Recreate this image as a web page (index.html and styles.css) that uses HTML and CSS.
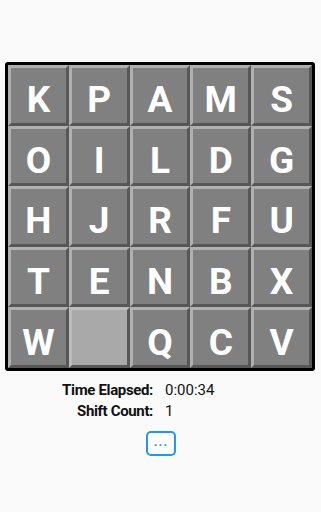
FILE: index.html
```html
<!DOCTYPE html>
<html>
<head>
<meta charset="utf-8">
<link rel="stylesheet" href="styles.css">
</head>
<body>
<div class="board">
  <div class="tile">K</div><div class="tile">P</div><div class="tile">A</div><div class="tile">M</div><div class="tile">S</div>
  <div class="tile">O</div><div class="tile">I</div><div class="tile">L</div><div class="tile">D</div><div class="tile">G</div>
  <div class="tile">H</div><div class="tile">J</div><div class="tile">R</div><div class="tile">F</div><div class="tile">U</div>
  <div class="tile">T</div><div class="tile">E</div><div class="tile">N</div><div class="tile">B</div><div class="tile">X</div>
  <div class="tile">W</div><div class="tile empty"></div><div class="tile">Q</div><div class="tile">C</div><div class="tile">V</div>
</div>
<div class="info">
  <div class="label">Time Elapsed:</div><div class="value">0:00:34</div>
  <div class="label">Shift Count:</div><div class="value">1</div>
</div>
<div class="actions">
  <button class="more">...</button>
</div>
</body>
</html>
```
FILE: styles.css
```css
html, body {
  margin: 0;
  padding: 0;
  background: #fafafa;
  font-family: Roboto, "Liberation Sans", sans-serif;
}
.board {
  box-sizing: border-box;
  margin: 62px 0 0 5px;
  width: 310px;
  height: 309px;
  border: 3px solid #000;
  border-radius: 3px;
  background: #a9a9a9;
  display: grid;
  grid-template-columns: repeat(5, 1fr);
  grid-template-rows: repeat(5, 1fr);
}
.tile {
  box-sizing: border-box;
  background: #808080;
  border-style: solid;
  border-width: 3px;
  border-color: #b0b0b0 #575757 #575757 #b0b0b0;
  color: #fff;
  font-weight: 700;
  font-size: 37px;
  display: flex;
  align-items: center;
  justify-content: center;
  padding-top: 9px;
}
.tile.empty {
  background: #a9a9a9;
  border-color: #bdbdbd #575757 #575757 #bdbdbd;
}
.info {
  margin-top: 9px;
  display: grid;
  grid-template-columns: 153px auto;
  column-gap: 12px;
  font-size: 15px;
  line-height: 21px;
  color: #111;
}
.label {
  text-align: right;
  font-weight: 700;
  letter-spacing: -0.35px;
}
.actions {
  margin-top: 9px;
  display: flex;
  justify-content: center;
}
.more {
  box-sizing: border-box;
  width: 30px;
  height: 25px;
  margin-left: 1px;
  padding: 0 0 4px 0;
  border: 2px solid #2196f3;
  border-radius: 5px;
  background: #fff;
  color: #2196f3;
  font-family: Roboto, "Liberation Sans", sans-serif;
  font-size: 13px;
  font-weight: 700;
  letter-spacing: 1px;
  line-height: 1;
}
```
